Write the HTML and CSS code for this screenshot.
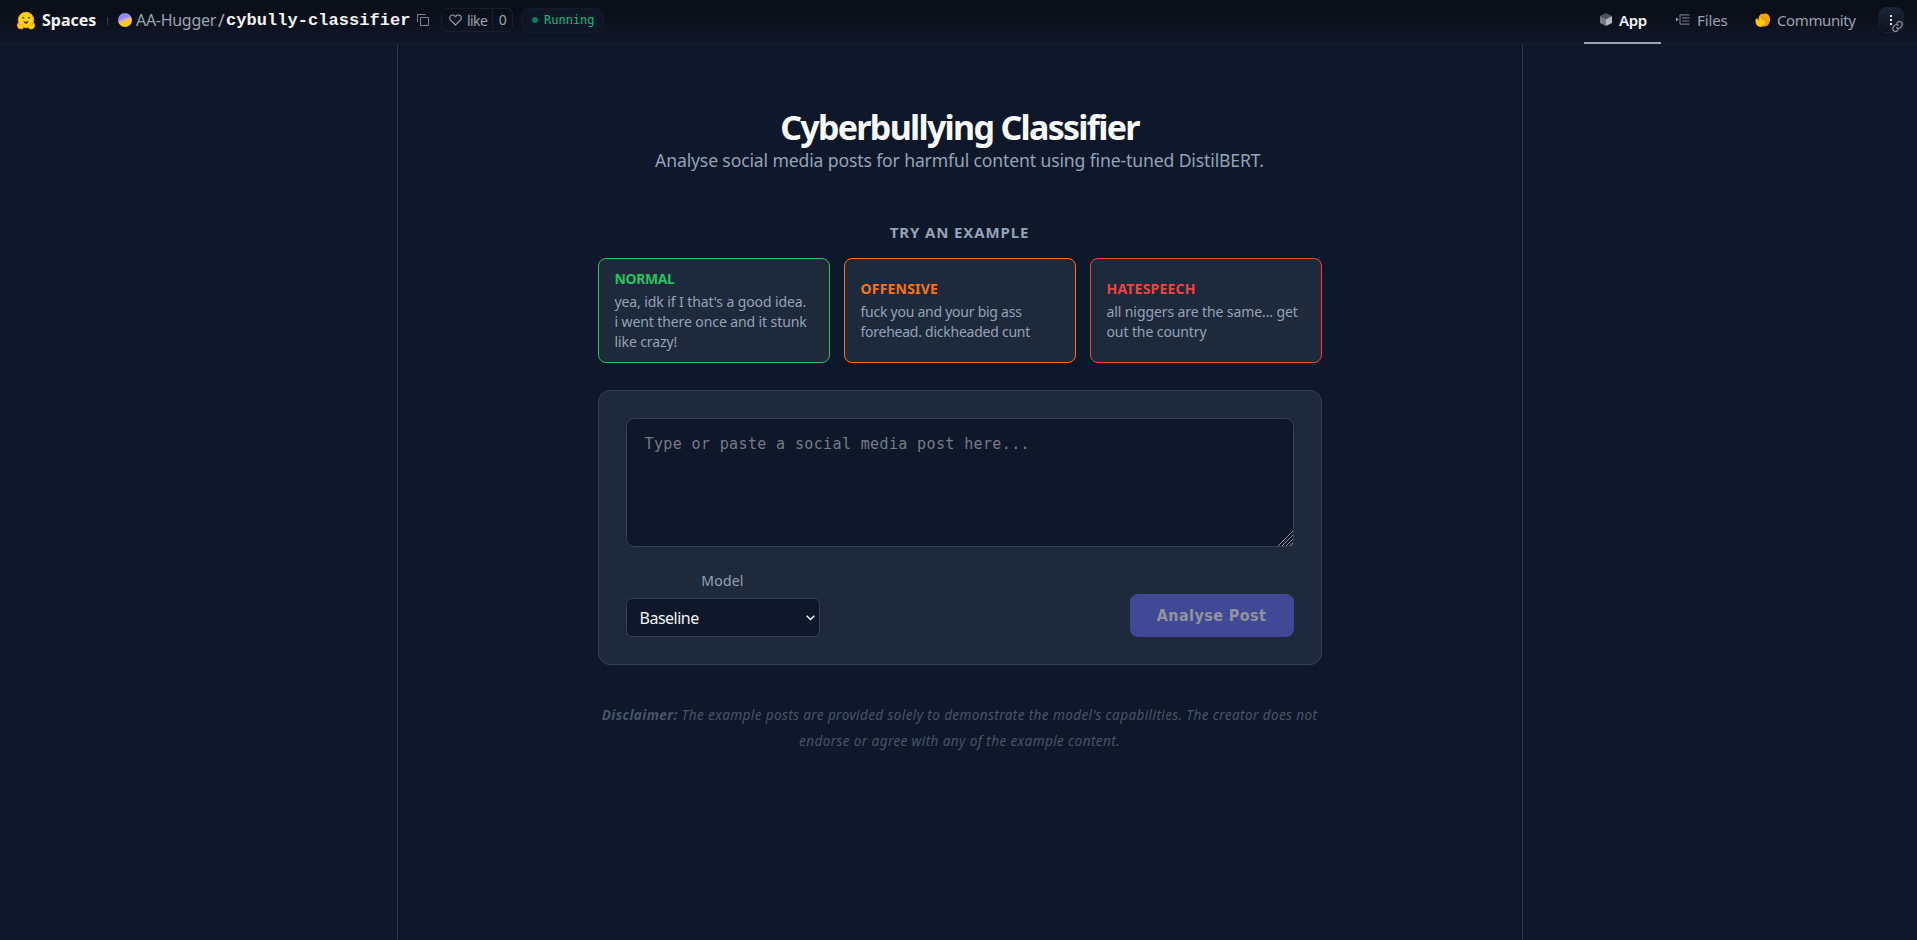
FILE: index.html
```
<!DOCTYPE html>
<html lang="en">

<head>
    <meta charset="UTF-8" />
    <meta name="viewport" content="width=device-width, initial-scale=1.0" />
    <title>Cyberbullying Classifier</title>
    <link rel="stylesheet" href="styles.css">
</head>

<body>
    <header class="topbar">
        <div class="repo">
            <svg class="logo" viewBox="0 0 20 20">
                <circle cx="10" cy="9.5" r="8.2" fill="#ffd21e" stroke="#ff9d0b" stroke-width="1" />
                <path d="M6 7.6q1.2-1.5 2.2 0M12 7.6q1.2-1.5 2.2 0" fill="none" stroke="#3a3b45" stroke-width="1.3" />
                <path d="M7.2 10.5q2.8 1.4 5.6 0q-.5 3-2.8 3t-2.8-3z" fill="#3a3b45" />
                <path d="M8.7 12.8q1.3-1.1 2.6 0q-1.3 1.2-2.6 0z" fill="#f94040" />
                <path d="M1 13.5q1-1.5 2 .2l2.5 1q2.2 1.3 1.4 3.8q-2.8 1-4.8-.3q-1.8-2-1.1-4.7zM19 13.5q-1-1.5-2 .2l-2.5 1q-2.2 1.3-1.4 3.8q2.8 1 4.8-.3q1.8-2 1.1-4.7z" fill="#ffd21e" stroke="#ff9d0b" stroke-width=".9" />
            </svg>
            <span class="spaces">Spaces</span>
            <span class="sep"></span>
            <span class="avatar"></span>
            <span class="owner">AA-Hugger</span>
            <span class="slash">/</span>
            <span class="name">cybully-classifier</span>
            <svg class="copy" viewBox="0 0 12 12" fill="none" stroke="#7d8492" stroke-width="1">
                <path d="M3.5 3.5h8v8h-8zM.5 8V.5H8.5" />
            </svg>
            <div class="like">
                <span class="like-btn">
                    <svg class="heart" viewBox="0 0 13 12" fill="none" stroke="#9ca3af" stroke-width="1.1">
                        <path d="M6.5 11L1.5 6.2C.3 4.9.4 2.8 1.6 1.7C3 .5 5 .8 6.5 2.6C8 .8 10 .5 11.4 1.7C12.6 2.8 12.7 4.9 11.5 6.2z" />
                    </svg>
                    <span class="like-text">like</span>
                </span>
                <span class="count">0</span>
            </div>
            <div class="status"><span class="dot"></span>Running</div>
        </div>

        <nav class="tabs">
            <a class="tab app active">
                <svg class="cube" viewBox="0 0 12 13">
                    <path d="M6 0l6 3-6 3.3L0 3z" fill="#4b5260" />
                    <path d="M0 3l6 3.3V13L0 10z" fill="#737a87" />
                    <path d="M12 3L6 6.3V13l6-3z" fill="#b1b5bd" />
                </svg>
                <span>App</span>
            </a>
            <a class="tab files">
                <svg class="files-icon" viewBox="0 0 14 11" fill="none" stroke="#6b7280" stroke-width="1.2">
                    <path d="M4 .8h9.5M6 3.9h7.5M6 7h7.5M4 10.1h9.5M4 .8v9.4" />
                    <path d="M0 3.2l2.7 2.2L0 7.6z" fill="#9ca3af" stroke="none" />
                </svg>
                <span>Files</span>
            </a>
            <a class="tab community">
                <svg class="hand" viewBox="0 0 16 14">
                    <path d="M4 3.2q2-3.2 4-2q2-1.8 3.4-.4q2.2-.2 2.5 2q1.6 1.6 1.2 4.2q-.3 5.3-5 6.5H4z" fill="#ef9a0e" />
                    <path d="M6.5 3.4l2-1.4M9 4.2l2.4-2M10.5 6l3-2M12 8l2.6-1.4" stroke="#ffc21c" stroke-width="1" />
                    <path d="M.8 8q-.5-2.5 1.3-2.2L4 7.5q-.8-3 1-4q1.4 0 1.8 2.8q4.2.5 3.8 3.8q-.8 3-4.5 3.4Q.5 13.5.8 8z" fill="#ffc91c" stroke="#f5a20c" stroke-width=".6" />
                </svg>
                <span>Community</span>
            </a>
            <div class="menu">
                <i></i><i></i><i></i>
                <svg class="link" viewBox="0 0 24 24" fill="none" stroke="#8a919e" stroke-width="2.2" stroke-linecap="round">
                    <path d="M10 14a5 5 0 0 0 7.5.5l3-3a5 5 0 0 0-7-7l-1.7 1.7" />
                    <path d="M14 10a5 5 0 0 0-7.5-.5l-3 3a5 5 0 0 0 7 7l1.7-1.7" />
                </svg>
            </div>
        </nav>
    </header>

    <div class="page">
        <main class="content">
            <h1>Cyberbullying Classifier</h1>
            <p class="subtitle">Analyse social media posts for harmful content using fine-tuned DistilBERT.</p>

            <h2>TRY AN EXAMPLE</h2>
            <div class="examples">
                <button class="example normal">
                    <strong>NORMAL</strong>
                    <span>yea, idk if I that's a good idea.<br />i went there once and it stunk<br />like crazy!</span>
                </button>
                <button class="example offensive">
                    <strong>OFFENSIVE</strong>
                    <span>fuck you and your big ass<br />forehead. dickheaded cunt</span>
                </button>
                <button class="example hatespeech">
                    <strong>HATESPEECH</strong>
                    <span>all niggers are the same... get<br />out the country</span>
                </button>
            </div>

            <div class="panel">
                <div class="post">
                    <textarea placeholder="Type or paste a social media post here..."></textarea>
                    <svg class="grip" viewBox="0 0 15 15" stroke="#8b909a" stroke-width="1">
                        <path d="M0 15L15 0M4 15L15 4M8 15L15 8M12 15L15 12" />
                    </svg>
                </div>
                <div class="controls">
                    <div class="model">
                        <label for="model">Model</label>
                        <div class="select-wrap">
                            <select id="model">
                                <option>Baseline</option>
                            </select>
                            <svg class="chevron" viewBox="0 0 9 6" fill="none" stroke="#f1f5f9" stroke-width="1.5">
                                <path d="M.7.7l3.8 3.8L8.3.7" />
                            </svg>
                        </div>
                    </div>
                    <button class="analyse" disabled>Analyse Post</button>
                </div>
            </div>

            <p class="disclaimer"><strong>Disclaimer:</strong> The example posts are provided solely to demonstrate the model's capabilities. The creator does not<br />endorse or agree with any of the example content.</p>
        </main>
    </div>
</body>

</html>
```
FILE: styles.css
```
* {
    box-sizing: border-box;
}

body {
    margin: 0;
    height: 100vh;
    overflow: hidden;
    display: flex;
    flex-direction: column;
    background: #0f172a;
    font-family: "Noto Sans", sans-serif;
    color: #94a3b8;
}

svg {
    display: block;
    flex: none;
}

.topbar {
    height: 44px;
    flex: none;
    display: flex;
    justify-content: space-between;
    padding: 0 13px 0 16px;
    background: linear-gradient(#0b0f19, #0b0f19 30%, #0f172a);
    border-bottom: 1px solid #141e30;
    font-size: 15px;
    color: #9ca3af;
    white-space: nowrap;
}

.repo {
    display: flex;
    align-items: center;
    height: 40px;
}

.logo {
    width: 20px;
    height: 19px;
}

.spaces {
    width: 55px;
    margin-left: 6px;
    font-weight: 700;
    font-size: 16px;
    letter-spacing: 0;
    color: #f3f4f6;
}

.sep {
    width: 1px;
    height: 8px;
    margin: 2px 10px 0;
    background: #374151;
}

.avatar {
    width: 14px;
    height: 14px;
    border-radius: 50%;
    background: linear-gradient(160deg, #8b8cf6 35%, #e9b796 52%, #facc15 65%);
}

.owner {
    width: 82px;
    margin-left: 4px;
    font-size: 16px;
    letter-spacing: -0.3px;
}

.slash {
    width: 8px;
    font-size: 18px;
}

.name {
    width: 184px;
    font: 700 17px "Liberation Mono", monospace;
    letter-spacing: 0.05px;
    color: #f3f4f6;
}

.copy {
    width: 12px;
    height: 12px;
    margin-left: 7px;
}

.like {
    display: flex;
    width: 72px;
    height: 24px;
    margin-left: 12px;
    border: 1px solid #171e2d;
    border-radius: 6px;
    font-size: 14px;
    letter-spacing: -0.6px;
}

.like-btn {
    display: flex;
    align-items: center;
    width: 51px;
    padding-left: 7px;
    gap: 5px;
    border-right: 1px solid #171e2d;
}

.heart {
    width: 13px;
    height: 12px;
}

.count {
    flex: 1;
    line-height: 22px;
    text-align: center;
}

.status {
    display: flex;
    align-items: center;
    width: 83px;
    height: 25px;
    margin-left: 8px;
    padding-left: 10px;
    border: 1px solid #131c2d;
    border-radius: 8px;
    background: #0f1727;
    font: 12px "DejaVu Sans Mono", monospace;
    color: #10b981;
}

.dot {
    width: 6px;
    height: 6px;
    margin-right: 6px;
    border-radius: 50%;
    background: #0b7a5a;
}

.tabs {
    display: flex;
}

.tab {
    display: flex;
    align-items: center;
    height: 44px;
    padding-bottom: 5px;
    font-size: 15px;
}

.app {
    width: 77px;
    padding: 0 0 3px 16px;
    gap: 7px;
    border-bottom: 2px solid #9ca3af;
    font-weight: 600;
    letter-spacing: -0.4px;
    color: #f3f4f6;
}

.cube {
    width: 12px;
    height: 13px;
}

.files {
    width: 80px;
    padding-left: 15px;
    gap: 7px;
    letter-spacing: -0.1px;
}

.files-icon {
    width: 14px;
    height: 11px;
}

.community {
    width: 137px;
    padding-left: 14px;
    gap: 6px;
    letter-spacing: -0.4px;
}

.hand {
    width: 16px;
    height: 14px;
}

.menu {
    position: relative;
    display: flex;
    flex-direction: column;
    align-items: center;
    justify-content: center;
    gap: 2px;
    width: 26px;
    height: 26px;
    margin-top: 7px;
    border: 1px solid #182131;
    border-radius: 8px;
    background: linear-gradient(#1b2535, #0d121e);
}

.menu i {
    width: 2px;
    height: 2px;
    background: #e5e7eb;
}

.link {
    position: absolute;
    right: -1px;
    bottom: -1px;
    width: 13px;
    height: 13px;
    transform: rotate(-10deg);
}

.page {
    flex: 1;
    width: 1126px;
    margin: 0 auto;
    transform: translateX(1px);
    border: 1px solid #29364a;
    border-width: 0 1px;
}

.content {
    width: 724px;
    margin: 0 auto;
    padding-top: 63px;
    text-align: center;
}

h1 {
    margin: 0;
    font-size: 34px;
    line-height: 40px;
    letter-spacing: -1.7px;
    color: #f8fafc;
}

.subtitle {
    margin: 0;
    font-size: 17.6px;
    line-height: 26px;
    letter-spacing: -0.14px;
    white-space: nowrap;
}

h2 {
    margin: 49px 0 15px;
    font-size: 15px;
    line-height: 21px;
    letter-spacing: 0.87px;
}

.examples {
    display: grid;
    grid-template-columns: repeat(3, 1fr);
    gap: 14px;
}

.example {
    display: flex;
    flex-direction: column;
    justify-content: center;
    height: 105px;
    padding: 0 16px;
    border: 1px solid;
    border-radius: 8px;
    background: #1e293b;
    font: 14px/20px "Noto Sans", sans-serif;
    letter-spacing: -0.1px;
    text-align: left;
    white-space: nowrap;
}

.example strong {
    margin-bottom: 3px;
    letter-spacing: 0.2px;
}

.example span {
    color: #94a3b8;
}

.normal {
    color: #22c55e;
}

.normal strong {
    letter-spacing: -0.4px;
}

.offensive {
    color: #f97316;
    letter-spacing: -0.25px;
}

.hatespeech {
    color: #ef4444;
}

.panel {
    height: 275px;
    margin-top: 27px;
    padding: 27px;
    border: 1px solid #334155;
    border-radius: 12px;
    background: #1e293b;
}

.post,
.select-wrap {
    position: relative;
}

textarea {
    display: block;
    width: 100%;
    height: 129px;
    padding: 16px 18px;
    border: 1px solid #334155;
    border-radius: 8px;
    background: #0f172a;
    font: 15px/18px "DejaVu Sans Mono", monospace;
    letter-spacing: 0.37px;
    resize: none;
}

textarea::placeholder {
    color: #757b86;
}

.grip {
    position: absolute;
    right: 1px;
    bottom: 1px;
    width: 15px;
    height: 15px;
}

.controls {
    display: flex;
    justify-content: space-between;
    align-items: flex-end;
    height: 90px;
}

.model {
    display: flex;
    flex-direction: column;
    gap: 7px;
    font-size: 14px;
    line-height: 20px;
    letter-spacing: 0.2px;
}

select {
    display: block;
    width: 194px;
    height: 39px;
    padding: 0 13px;
    border: 1px solid #334155;
    border-radius: 6px;
    background: #0f172a;
    font: 16px "Noto Sans", sans-serif;
    letter-spacing: -0.5px;
    color: #f1f5f9;
    appearance: none;
}

.chevron {
    position: absolute;
    right: 5px;
    top: 17px;
    width: 9px;
    height: 6px;
}

.analyse {
    width: 164px;
    height: 43px;
    padding: 0;
    border: 0;
    border-radius: 8px;
    background: #414896;
    font: 700 16px "DejaVu Sans Condensed", "DejaVu Sans", sans-serif;
    letter-spacing: 0.4px;
    color: #8f949d;
}

.disclaimer {
    margin: 37px 0 0;
    font-size: 13.6px;
    font-style: italic;
    line-height: 26px;
    letter-spacing: 0.37px;
    white-space: nowrap;
    color: #475569;
}
```
